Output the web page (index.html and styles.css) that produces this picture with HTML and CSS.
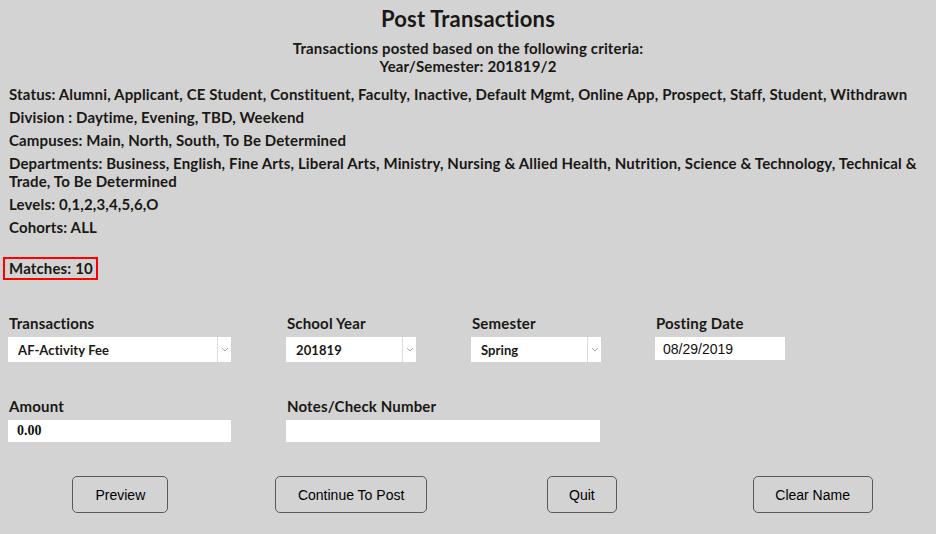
FILE: index.html
```html
<!DOCTYPE html>
<html lang="en">
<head>
  <meta charset="UTF-8">
  <title>Post Transactions</title>
  <link rel="stylesheet" href="styles.css">
</head>
<body>

<div class="page">
  <h1 class="page-title">Post Transactions</h1>
  <div class="criteria-head">
    <div>Transactions posted based on the following criteria:</div>
    <div>Year/Semester: 201819/2</div>
  </div>

  <div class="criteria">
    <p>Status: Alumni, Applicant, CE Student, Constituent, Faculty, Inactive, Default Mgmt, Online App, Prospect, Staff, Student, Withdrawn</p>
    <p>Division : Daytime, Evening, TBD, Weekend</p>
    <p>Campuses: Main, North, South, To Be Determined</p>
    <p>Departments: Business, English, Fine Arts, Liberal Arts, Ministry, Nursing &amp; Allied Health, Nutrition, Science &amp; Technology, Technical &amp; Trade, To Be Determined</p>
    <p>Levels: 0,1,2,3,4,5,6,O</p>
    <p>Cohorts: ALL</p>
  </div>

  <div class="matches">Matches: 10</div>

  <div class="form-grid">
    <div class="field">
      <label>Transactions</label>
      <div class="select wide">
        <span class="select-value">AF-Activity Fee</span>
        <span class="select-arrow"><svg width="8" height="5" viewBox="0 0 8 5"><path d="M1 1 L4 4 L7 1" fill="none" stroke="#a8a8a8" stroke-width="1"/></svg></span>
      </div>
    </div>
    <div class="field">
      <label>School Year</label>
      <div class="select">
        <span class="select-value">201819</span>
        <span class="select-arrow"><svg width="8" height="5" viewBox="0 0 8 5"><path d="M1 1 L4 4 L7 1" fill="none" stroke="#a8a8a8" stroke-width="1"/></svg></span>
      </div>
    </div>
    <div class="field">
      <label>Semester</label>
      <div class="select">
        <span class="select-value">Spring</span>
        <span class="select-arrow"><svg width="8" height="5" viewBox="0 0 8 5"><path d="M1 1 L4 4 L7 1" fill="none" stroke="#a8a8a8" stroke-width="1"/></svg></span>
      </div>
    </div>
    <div class="field">
      <label>Posting Date</label>
      <input type="text" class="date-input" value="08/29/2019">
    </div>

    <div class="field">
      <label>Amount</label>
      <input type="text" class="amount-input" value="0.00">
    </div>
    <div class="field notes">
      <label>Notes/Check Number</label>
      <input type="text" class="notes-input">
    </div>
  </div>

  <div class="button-row">
    <button class="action-btn btn-preview">Preview</button>
    <button class="action-btn btn-post">Continue To Post</button>
    <button class="action-btn btn-quit">Quit</button>
    <button class="action-btn btn-clear">Clear Name</button>
  </div>
</div>

</body>
</html>
```

FILE: styles.css
```css
body {
  margin: 0;
  background-color: #d3d3d3;
  color: #1a1814;
  font-family: Lato, "Liberation Sans", sans-serif;
  font-weight: bold;
  font-size: 15px;
  letter-spacing: 0.15px;
}
.page {
  padding: 7px 8px 0 8px;
}
.page-title {
  margin: 0;
  font-size: 22px;
  line-height: 24px;
  text-align: center;
  letter-spacing: 0.2px;
}
.criteria-head {
  margin-top: 8px;
  line-height: 18px;
  text-align: center;
}
.criteria {
  margin-top: 10px;
}
.criteria p {
  margin: 0 0 5px 1px;
  line-height: 18px;
}
.matches {
  width: max-content;
  margin: 21px 0 0 -5px;
  padding: 0 3px 0 4px;
  height: 19px;
  line-height: 19px;
  border: 2px solid #ff0000;
}
.form-grid {
  display: grid;
  grid-template-columns: 278px 185px 184px 1fr;
  row-gap: 35px;
  margin-top: 34px;
}
.field label {
  display: block;
  height: 18px;
  line-height: 18px;
  margin: 0 0 5px 1px;
}
.select {
  display: flex;
  width: 130px;
  height: 25px;
  background: white;
}
.select.wide {
  width: 223px;
}
.select-value {
  flex: 1;
  padding-left: 10px;
  line-height: 27px;
  font-size: 13px;
  letter-spacing: 0.1px;
}
.select-arrow {
  width: 13px;
  border-left: 1px solid #dcdcdc;
  display: flex;
  align-items: center;
  justify-content: center;
}
input {
  display: block;
  box-sizing: border-box;
  border: none;
  outline: none;
  background: white;
  margin: 0;
  color: #111;
  letter-spacing: 0;
}
.date-input {
  width: 130px;
  height: 23px;
  padding: 0 8px;
  font-family: "Liberation Sans", Arial, sans-serif;
  font-weight: normal;
  font-size: 14px;
}
.amount-input {
  width: 223px;
  height: 22px;
  padding: 0 9px;
  font-family: "Liberation Serif", serif;
  font-weight: bold;
  font-size: 14px;
}
.notes-input {
  width: 314px;
  height: 22px;
}
.notes {
  grid-column: span 2;
}
.button-row {
  display: grid;
  grid-template-columns: repeat(4, 1fr);
  justify-items: center;
  margin: 34px 0 0 -3px;
}
.action-btn {
  height: 37px;
  padding: 0;
  border: 1px solid #5a5a5a;
  border-radius: 5px;
  background: transparent;
  color: #000;
  font-family: "Liberation Sans", Arial, sans-serif;
  font-size: 14px;
  font-weight: normal;
  letter-spacing: 0;
}
.btn-preview { width: 96px; }
.btn-post { width: 152px; }
.btn-quit { width: 70px; }
.btn-clear { width: 120px; }
```
